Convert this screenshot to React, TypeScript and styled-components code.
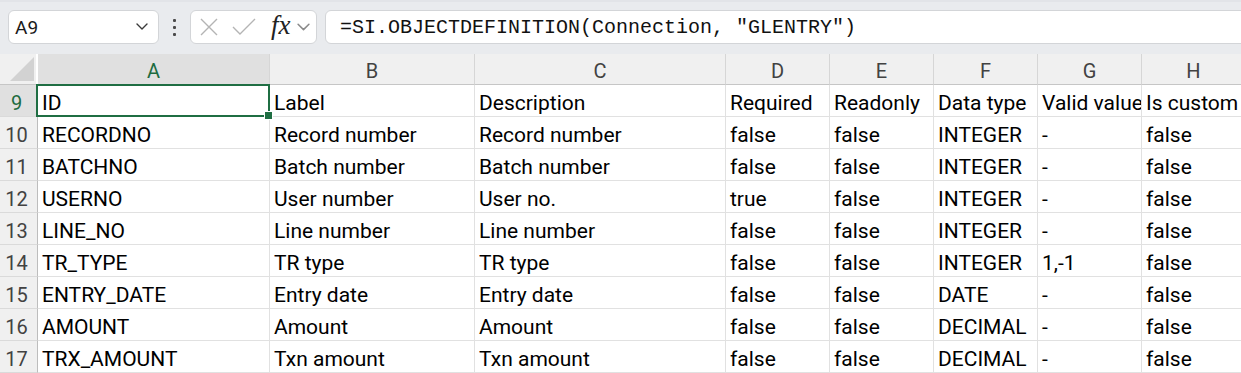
import styled, { createGlobalStyle } from 'styled-components';

const GlobalStyle = createGlobalStyle`
  html, body {
    margin: 0;
    padding: 0;
    background: #ffffff;
    overflow: hidden;
  }
  body {
    font-family: Roboto, "Liberation Sans", sans-serif;
  }
`;

const Page = styled.div`
  width: 1241px;
  height: 373px;
  overflow: hidden;
  display: flex;
  flex-direction: column;
`;

const FormulaBar = styled.div`
  height: 55px;
  box-sizing: border-box;
  display: flex;
  align-items: flex-start;
  padding: 8px 0 0 8px;
  background: #e9ebee;
  border-top: 2px solid #e2e4e8;
`;

const Box = styled.div<{ $width?: number }>`
  height: 34px;
  box-sizing: border-box;
  background: #ffffff;
  border: 1px solid #d3d5d8;
  border-radius: 6px;
  display: flex;
  align-items: center;
  flex: ${(p) => (p.$width ? `0 0 ${p.$width}px` : '1 1 auto')};
`;

const NameBox = styled(Box)`
  padding: 0 10px 0 6px;
  justify-content: space-between;
  font-size: 19px;
  color: #1a1a1a;
`;

const FxBox = styled(Box)`
  padding: 0 4px 0 9px;
  gap: 14px;
`;

const FormulaInput = styled(Box)`
  margin-left: 8px;
  margin-right: -12px;
  padding-left: 14px;
  font-family: "Liberation Mono", monospace;
  font-size: 20px;
  color: #111;
  white-space: nowrap;
`;

const Dots = styled.div`
  flex: 0 0 31px;
  height: 34px;
  display: flex;
  flex-direction: column;
  align-items: center;
  justify-content: center;
  gap: 4px;

  span {
    width: 3px;
    height: 3px;
    background: #4a4a4a;
    border-radius: 1px;
  }
`;

const FxLabel = styled.span`
  font-family: "Liberation Serif", "DejaVu Serif", serif;
  font-style: italic;
  font-size: 27px;
  line-height: 1;
  color: #222;
  margin-right: -8px;
  margin-left: 1px;
  padding-bottom: 3px;
`;

const Sheet = styled.div`
  display: grid;
  grid-template-columns: 38px 232px 205px 251px 104px 104px 104px 104px 104px;
  grid-template-rows: 31px repeat(9, 32px);
  position: relative;
`;

const Corner = styled.div`
  background: #f0f0f0;
  border-right: 2px solid #ffffff;
  border-bottom: 1px solid #c6c6c6;
  box-sizing: border-box;
  display: flex;
  align-items: flex-end;
  justify-content: flex-end;
  padding: 0 1px 2px 0;
`;

const ColHead = styled.div<{ $active?: boolean }>`
  background: ${(p) => (p.$active ? '#e0e0e0' : '#f0f0f0')};
  color: ${(p) => (p.$active ? '#1d6b40' : '#424242')};
  border-right: 1px solid #d6d6d6;
  border-bottom: 1px solid #c6c6c6;
  box-sizing: border-box;
  display: flex;
  align-items: center;
  justify-content: center;
  font-size: 20px;
  padding-top: 4px;
`;

const RowHead = styled.div<{ $active?: boolean }>`
  background: ${(p) => (p.$active ? '#e0e0e0' : '#f0f0f0')};
  color: ${(p) => (p.$active ? '#1d6b40' : '#424242')};
  border-right: 1px solid #bdbdbd;
  border-bottom: 1px solid #dadada;
  box-sizing: border-box;
  display: flex;
  align-items: center;
  justify-content: center;
  padding: 4px 4px 0 0;
  font-size: 20px;
`;

const Cell = styled.div`
  border-right: 1px solid #e1e1e1;
  border-bottom: 1px solid #e1e1e1;
  box-sizing: border-box;
  display: flex;
  align-items: center;
  padding: 4px 0 0 4px;
  font-size: 21px;
  color: #000;
  white-space: nowrap;
  overflow: hidden;
  position: relative;
`;

const Selection = styled.div`
  position: absolute;
  left: -2px;
  top: -1px;
  right: -1px;
  bottom: -1px;
  border: 2px solid #1f6e43;
  pointer-events: none;

  &::after {
    content: '';
    position: absolute;
    right: -5px;
    bottom: -5px;
    width: 7px;
    height: 7px;
    background: #1f6e43;
    border: 1px solid #fff;
  }
`;

const ActiveCell = styled(Cell)`
  overflow: visible;
  z-index: 1;
`;

const Chevron = ({ color, size }: { color: string; size: number }) => (
  <svg width={size} height={size * 0.6} viewBox="0 0 12 7" fill="none">
    <path d="M1 1l5 5 5-5" stroke={color} strokeWidth="1.4" strokeLinecap="round" strokeLinejoin="round" />
  </svg>
);

const columns = ['A', 'B', 'C', 'D', 'E', 'F', 'G', 'H'];

const rows: string[][] = [
  ['ID', 'Label', 'Description', 'Required', 'Readonly', 'Data type', 'Valid values', 'Is custom'],
  ['RECORDNO', 'Record number', 'Record number', 'false', 'false', 'INTEGER', '-', 'false'],
  ['BATCHNO', 'Batch number', 'Batch number', 'false', 'false', 'INTEGER', '-', 'false'],
  ['USERNO', 'User number', 'User no.', 'true', 'false', 'INTEGER', '-', 'false'],
  ['LINE_NO', 'Line number', 'Line number', 'false', 'false', 'INTEGER', '-', 'false'],
  ['TR_TYPE', 'TR type', 'TR type', 'false', 'false', 'INTEGER', '1,-1', 'false'],
  ['ENTRY_DATE', 'Entry date', 'Entry date', 'false', 'false', 'DATE', '-', 'false'],
  ['AMOUNT', 'Amount', 'Amount', 'false', 'false', 'DECIMAL', '-', 'false'],
  ['TRX_AMOUNT', 'Txn amount', 'Txn amount', 'false', 'false', 'DECIMAL', '-', 'false'],
];

export default function App() {
  return (
    <Page>
      <GlobalStyle />
      <FormulaBar>
        <NameBox $width={151}>
          <span>A9</span>
          <Chevron color="#3a3a3a" size={12} />
        </NameBox>
        <Dots>
          <span />
          <span />
          <span />
        </Dots>
        <FxBox $width={127}>
          <svg width="18" height="18" viewBox="0 0 18 18">
            <path d="M1 1l16 16M17 1L1 17" stroke="#b4b4b4" strokeWidth="1.4" />
          </svg>
          <svg width="24" height="18" viewBox="0 0 24 18">
            <path d="M1 9l7 7L23 1" stroke="#b4b4b4" strokeWidth="1.4" fill="none" />
          </svg>
          <FxLabel>fx</FxLabel>
          <Chevron color="#8a8a8a" size={13} />
        </FxBox>
        <FormulaInput>=SI.OBJECTDEFINITION(Connection, "GLENTRY")</FormulaInput>
      </FormulaBar>
      <Sheet>
        <Corner>
          <svg width="25" height="25" viewBox="0 0 25 25">
            <path d="M24 0V24H0Z" fill="#d2d2d2" />
          </svg>
        </Corner>
        {columns.map((c) => (
          <ColHead key={c} $active={c === 'A'}>
            {c}
          </ColHead>
        ))}
        {rows.map((row, i) => {
          const n = 9 + i;
          return [
            <RowHead key={`h${n}`} $active={n === 9}>
              {n}
            </RowHead>,
            ...row.map((v, j) =>
              n === 9 && j === 0 ? (
                <ActiveCell key={`${n}-${j}`}>
                  {v}
                  <Selection />
                </ActiveCell>
              ) : (
                <Cell key={`${n}-${j}`}>{v}</Cell>
              ),
            ),
          ];
        })}
      </Sheet>
    </Page>
  );
}
